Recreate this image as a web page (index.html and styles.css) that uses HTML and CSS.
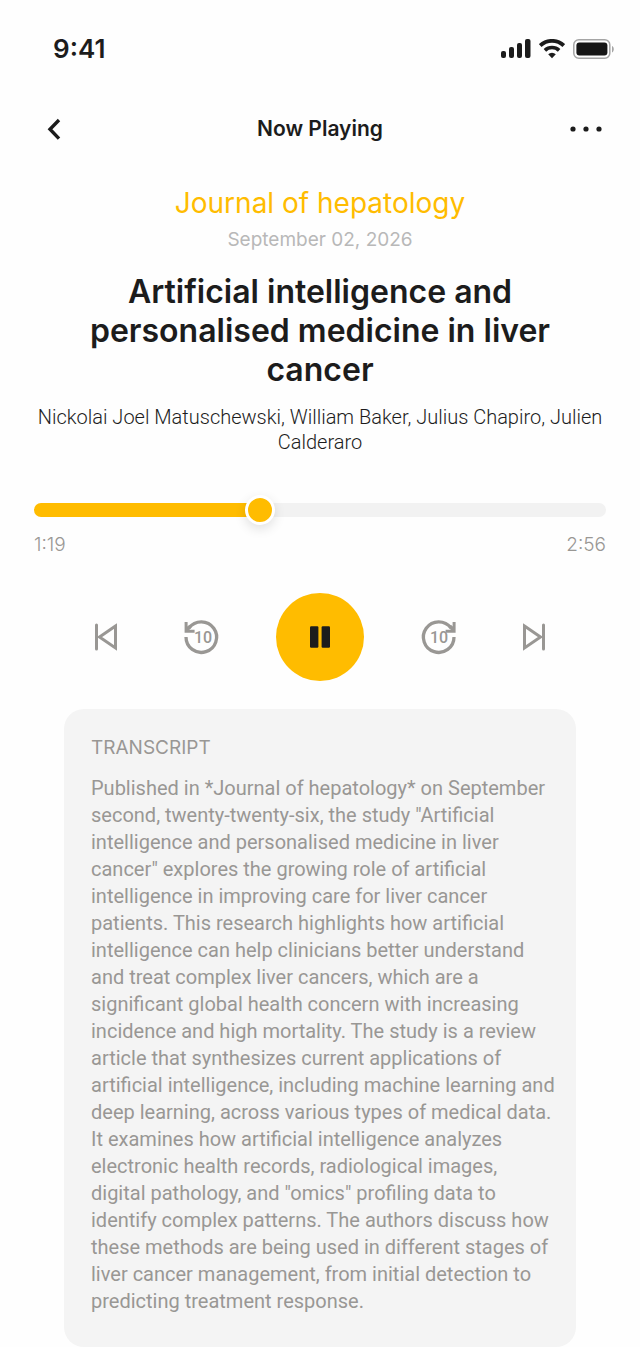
FILE: index.html
```
<!DOCTYPE html>
<html lang="en">
<head>
  <meta charset="UTF-8">
  <meta name="viewport" content="width=device-width, initial-scale=1.0">
  <title>Now Playing</title>
  <link rel="stylesheet" href="styles.css">
</head>
<body>
  <div class="status-bar">
    <span class="time">9:41</span>
    <div class="status-icons">
      <svg width="30" height="20" viewBox="0 0 30 20" fill="currentColor">
        <rect x="0" y="12" width="5" height="7" rx="2"/>
        <rect x="8" y="8" width="5" height="11" rx="2"/>
        <rect x="16" y="4" width="5" height="15" rx="2"/>
        <rect x="24" y="0" width="5.5" height="19" rx="2"/>
      </svg>
      <svg width="26" height="20" viewBox="0 0 26 20" fill="none" stroke="currentColor">
        <path d="M1.2 6.6a17 17 0 0 1 23.6 0" stroke-width="3.8"/>
        <path d="M5.9 11.4a10.3 10.3 0 0 1 14.2 0" stroke-width="3.6"/>
        <path d="M13 19.2l-3.8-3.9a5.4 5.4 0 0 1 7.6 0z" fill="currentColor" stroke="none"/>
      </svg>
      <svg width="42" height="20" viewBox="0 0 42 20">
        <rect x="0.8" y="0.8" width="36" height="18.4" rx="5" fill="none" stroke="#a5a5a5" stroke-width="1.5"/>
        <rect x="3.4" y="3.4" width="31" height="13.2" rx="3" fill="#161616"/>
        <path d="M39 7v6.4c2.4-1 2.4-5.4 0-6.4z" fill="#a5a5a5"/>
      </svg>
    </div>
  </div>

  <header class="header">
    <button class="icon-btn back" aria-label="Back">
      <svg width="16" height="24" viewBox="0 0 16 24" fill="none" stroke="currentColor" stroke-width="3.4">
        <path d="M13 3L4 12.2L13 21.6"/>
      </svg>
    </button>
    <h1 class="header-title">Now Playing</h1>
    <button class="icon-btn more" aria-label="More options">
      <svg width="32" height="24" viewBox="0 0 32 24" fill="currentColor">
        <circle cx="3" cy="12" r="2.6"/>
        <circle cx="16" cy="12" r="2.6"/>
        <circle cx="29" cy="12" r="2.6"/>
      </svg>
    </button>
  </header>

  <main class="player">
    <section class="article">
      <div class="journal">Journal of hepatology</div>
      <div class="date">September 02, 2026</div>
      <h2 class="title">Artificial intelligence and personalised medicine in liver cancer</h2>
      <div class="authors">Nickolai Joel Matuschewski, William Baker, Julius Chapiro, Julien Calderaro</div>
    </section>

    <section class="progress">
      <input class="seek" type="range" min="0" max="100" value="39" aria-label="Seek" style="--played: 39%">
      <div class="times">
        <span>1:19</span>
        <span>2:56</span>
      </div>
    </section>

    <div class="controls">
      <button class="icon-btn" aria-label="Previous">
        <svg width="40" height="40" viewBox="0 0 40 40" fill="none" stroke="currentColor" stroke-width="3">
          <path d="M10.5 8V32" stroke-linecap="round"/>
          <path d="M29.5 9L13.5 20L29.5 31Z"/>
        </svg>
      </button>
      <button class="icon-btn" aria-label="Back 10 seconds">
        <svg width="40" height="40" viewBox="0 0 40 40">
          <path d="M5 20A15.3 15.3 0 1 0 8 11" fill="none" stroke="currentColor" stroke-width="3.3"/>
          <path d="M3.6 5h3v4.6l1.6-1.8 2.6 2-2.4 2.9h5.2v3h-10z" fill="currentColor"/>
          <text class="seconds" x="22" y="26" text-anchor="middle">10</text>
        </svg>
      </button>
      <button class="play" aria-label="Pause">
        <svg width="22" height="22" viewBox="0 0 22 22" fill="currentColor">
          <rect x="1" y="0.3" width="8.4" height="21.4" rx="1.2"/>
          <rect x="12.6" y="0.3" width="8.4" height="21.4" rx="1.2"/>
        </svg>
      </button>
      <button class="icon-btn" aria-label="Forward 10 seconds">
        <svg width="40" height="40" viewBox="0 0 40 40">
          <path d="M35 20A15.3 15.3 0 1 1 32 11" fill="none" stroke="currentColor" stroke-width="3.3"/>
          <path d="M36.6 5h-3v4.6l-1.6-1.8-2.6 2 2.4 2.9h-5.2v3h10z" fill="currentColor"/>
          <text class="seconds" x="20" y="26" text-anchor="middle">10</text>
        </svg>
      </button>
      <button class="icon-btn" aria-label="Next">
        <svg width="40" height="40" viewBox="0 0 40 40" fill="none" stroke="currentColor" stroke-width="3">
          <path d="M29.5 8V32" stroke-linecap="round"/>
          <path d="M10.5 9L26.5 20L10.5 31Z"/>
        </svg>
      </button>
    </div>

    <section class="transcript">
      <h3>TRANSCRIPT</h3>
      <p>Published in *Journal of hepatology* on September<br>
        second, twenty-twenty-six, the study "Artificial<br>
        intelligence and personalised medicine in liver<br>
        cancer" explores the growing role of artificial<br>
        intelligence in improving care for liver cancer<br>
        patients. This research highlights how artificial<br>
        intelligence can help clinicians better understand<br>
        and treat complex liver cancers, which are a<br>
        significant global health concern with increasing<br>
        incidence and high mortality. The study is a review<br>
        article that synthesizes current applications of<br>
        artificial intelligence, including machine learning and<br>
        deep learning, across various types of medical data.<br>
        It examines how artificial intelligence analyzes<br>
        electronic health records, radiological images,<br>
        digital pathology, and "omics" profiling data to<br>
        identify complex patterns. The authors discuss how<br>
        these methods are being used in different stages of<br>
        liver cancer management, from initial detection to<br>
        predicting treatment response.</p>
    </section>
  </main>
</body>
</html>
```
FILE: styles.css
```
:root {
  --accent: #ffbc00;
  --text: #1c1c1c;
  --muted: #999794;
  --light: #b8b8b8;
  --track: #f2f2f2;
  --card: #f4f4f4;
}
* {
  box-sizing: border-box;
}
body {
  margin: 0;
  background: #fefefe;
  color: var(--text);
  font-family: "Inter", "Liberation Sans", sans-serif;
  font-size: 19px;
}
h1, h2, h3, p {
  margin: 0;
}
button {
  padding: 0;
  border: none;
  background: none;
  color: inherit;
  cursor: pointer;
}
svg {
  display: block;
}
.status-bar {
  display: flex;
  justify-content: space-between;
  align-items: center;
  padding: 32px 25px 0 53px;
}
.status-bar .time {
  font-size: 26px;
  font-weight: 600;
  line-height: 34px;
}
.status-icons {
  display: flex;
  gap: 8px;
}
.header {
  display: grid;
  grid-template-columns: 1fr auto 1fr;
  align-items: center;
  padding: 46px 38px 40px;
}
.header-title {
  font-size: 21px;
  font-weight: 600;
  line-height: 34px;
}
.header .back {
  justify-self: start;
  padding-left: 8px;
}
.header .more {
  justify-self: end;
}
.player {
  padding: 0 34px;
}
.article {
  text-align: center;
}
.journal {
  color: var(--accent);
  font-size: 28px;
  font-weight: 400;
  line-height: 34px;
}
.date {
  margin-top: 8px;
  color: var(--light);
  line-height: 24px;
}
.title {
  margin-top: 20px;
  padding: 0 40px;
  font-size: 32px;
  font-weight: 600;
  line-height: 39px;
}
.authors {
  margin-top: 16px;
  font-family: Roboto, sans-serif;
  font-size: 20px;
  font-weight: 300;
  line-height: 25px;
}
.progress {
  margin-top: 40px;
}
.seek {
  display: block;
  width: 100%;
  height: 30px;
  margin: 0;
  background: none;
  -webkit-appearance: none;
  appearance: none;
}
.seek::-webkit-slider-runnable-track {
  height: 14px;
  border-radius: 7px;
  background: linear-gradient(to right, var(--accent) var(--played), var(--track) var(--played));
}
.seek::-webkit-slider-thumb {
  -webkit-appearance: none;
  width: 30px;
  height: 30px;
  margin-top: -8px;
  border: 3px solid #fff;
  border-radius: 50%;
  background: var(--accent);
  box-shadow: 0 4px 12px rgba(0, 0, 0, 0.12);
}
.times {
  display: flex;
  justify-content: space-between;
  margin-top: 8px;
  color: var(--muted);
  font-weight: 300;
  line-height: 24px;
}
.controls {
  display: flex;
  justify-content: space-between;
  align-items: center;
  margin-top: 36px;
  padding: 0 52px;
}
.controls .icon-btn {
  color: var(--muted);
}
.seconds {
  fill: currentColor;
  font-family: Roboto, sans-serif;
  font-size: 16px;
  font-weight: 500;
}
.play {
  display: flex;
  justify-content: center;
  align-items: center;
  width: 88px;
  height: 88px;
  border-radius: 50%;
  background: var(--accent);
}
.transcript {
  margin: 28px 30px 0;
  padding: 27px 27px 32px;
  border-radius: 20px;
  background: var(--card);
  color: var(--muted);
}
.transcript h3 {
  margin-bottom: 15px;
  font-size: 19px;
  font-weight: 400;
  line-height: 24px;
}
.transcript p {
  font-family: Roboto, sans-serif;
  font-size: 20px;
  line-height: 27px;
  white-space: nowrap;
}
```
